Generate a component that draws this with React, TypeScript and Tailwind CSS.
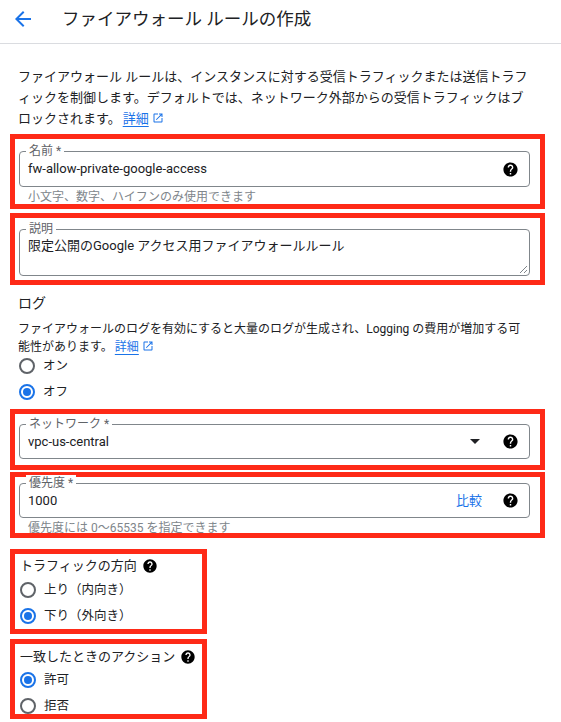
import React from "react";

const HELP =
  "M12 2C6.48 2 2 6.48 2 12s4.48 10 10 10 10-4.48 10-10S17.52 2 12 2zm1 17h-2v-2h2v2zm2.07-7.75l-.9.92C13.45 12.9 13 13.5 13 15h-2v-.5c0-1.1.45-2.1 1.17-2.83l1.24-1.26c.37-.36.59-.86.59-1.41 0-1.1-.9-2-2-2s-2 .9-2 2H8c0-2.21 1.79-4 4-4s4 1.79 4 4c0 .88-.36 1.68-.93 2.25z";

function HelpIcon({ size = 17 }: { size?: number }) {
  return (
    <svg width={size} height={size} viewBox="0 0 24 24" className="shrink-0">
      <path fill="#000" d={HELP} />
    </svg>
  );
}

function ExtIcon() {
  return (
    <svg width="12" height="12" viewBox="0 0 24 24" className="inline-block ml-[3px] align-[-1px]">
      <path
        fill="#1a73e8"
        d="M19 19H5V5h7V3H5c-1.11 0-2 .9-2 2v14c0 1.1.89 2 2 2h14c1.1 0 2-.9 2-2v-7h-2v7zM14 3v2h3.59l-9.83 9.83 1.41 1.41L19 6.41V10h2V3h-7z"
      />
    </svg>
  );
}

function Radio({ checked, label }: { checked?: boolean; label: string }) {
  return (
    <div className="flex items-center h-[26px]">
      <span
        className={
          checked
            ? "w-[16px] h-[16px] rounded-full border-2 border-[#1a73e8] flex items-center justify-center"
            : "w-[16px] h-[16px] rounded-full border-2 border-[#5f6368] flex items-center justify-center"
        }
      >
        {checked && <span className="w-[8px] h-[8px] rounded-full bg-[#1a73e8]" />}
      </span>
      <span className="ml-[8px] text-[12.5px] text-[#202124]">{label}</span>
    </div>
  );
}

function FieldLabel({ text }: { text: string }) {
  return (
    <span className="absolute left-[6px] top-[-9px] bg-white px-[3px] text-[12px] leading-[16px] text-[#5f6368]">
      {text}
    </span>
  );
}

function RedBox({ className, children }: { className: string; children: React.ReactNode }) {
  return <div className={"border-[5px] border-[#fe2a17] box-border " + className}>{children}</div>;
}

export default function App() {
  return (
    <div className="w-[561px] h-[722px] overflow-hidden bg-white font-['Roboto','Noto_Sans_CJK_JP',sans-serif] text-[#202124]">
      {/* header */}
      <div className="h-[44px] border-b border-[#dadce0] flex items-center">
        <svg width="24" height="24" viewBox="0 0 24 24" className="ml-[11px] mb-[5px]">
          <path fill="#1a73e8" d="M20 11H7.83l5.59-5.59L12 4l-8 8 8 8 1.41-1.41L7.83 13H20v-2z" />
        </svg>
        <h1 className="ml-[27px] mb-[5px] text-[17.5px] leading-[24px] font-normal text-[#202124]">
          ファイアウォール ルールの作成
        </h1>
      </div>

      <div className="pl-[10px]">
        <p className="mt-[22px] ml-[8px] w-[512px] text-[13px] leading-[21px] text-[#202124]">
          ファイアウォール ルールは、インスタンスに対する受信トラフィックまたは送信トラフィックを制御します。デフォルトでは、ネットワーク外部からの受信トラフィックはブロックされます。
          <span className="text-[#1a73e8] underline decoration-[#1a73e8] underline-offset-[3px] ml-[2px]">詳細</span>
          <ExtIcon />
        </p>

        {/* name */}
        <RedBox className="mt-[5px] w-[535px] h-[75px] pt-[12px] pl-[4px]">
          <div className="relative w-[511px] h-[36px] border border-[#80868b] rounded-[4px] flex items-center pl-[8px] pr-[10px]">
            <FieldLabel text="名前 *" />
            <span className="flex-1 text-[13px]">fw-allow-private-google-access</span>
            <HelpIcon />
          </div>
          <div className="mt-[2px] ml-[9px] text-[12px] leading-[16px] text-[#80868b]">
            小文字、数字、ハイフンのみ使用できます
          </div>
        </RedBox>

        {/* description */}
        <RedBox className="mt-[4px] w-[535px] h-[72px] pt-[11px] pl-[4px]">
          <div className="relative w-[511px] h-[47px] border border-[#80868b] rounded-[4px] pl-[8px] pt-[3px]">
            <FieldLabel text="説明" />
            <span className="text-[13px] leading-[20px]">限定公開のGoogle アクセス用ファイアウォールルール</span>
            <svg width="9" height="9" viewBox="0 0 9 9" className="absolute right-[1px] bottom-[1px]">
              <path d="M8 1L1 8M8 5L5 8" stroke="#80868b" strokeWidth="1" />
            </svg>
          </div>
        </RedBox>

        {/* log */}
        <div className="ml-[8px] mt-[8px] text-[14px] leading-[20px]">ログ</div>
        <p className="ml-[8px] mt-[7px] w-[514px] text-[12px] leading-[18px]">
          ファイアウォールのログを有効にすると大量のログが生成され、Logging の費用が増加する可能性があります。
          <span className="text-[#1a73e8] underline decoration-[#1a73e8] underline-offset-[3px] ml-[2px]">詳細</span>
          <ExtIcon />
        </p>
        <div className="ml-[9px] mt-[-3px]">
          <Radio label="オン" />
          <Radio label="オフ" checked />
        </div>

        {/* network */}
        <RedBox className="mt-[4px] w-[535px] h-[61px] pt-[10px] pl-[4px]">
          <div className="relative w-[511px] h-[35px] border border-[#80868b] rounded-[4px] flex items-center pl-[8px] pr-[10px]">
            <FieldLabel text="ネットワーク *" />
            <span className="flex-1 text-[13px]">vpc-us-central</span>
            <svg width="10" height="5" viewBox="0 0 10 5" className="mr-[22px]">
              <path d="M0 0L10 0L5 5Z" fill="#202124" />
            </svg>
            <HelpIcon />
          </div>
        </RedBox>

        {/* priority */}
        <RedBox className="mt-[2px] w-[535px] h-[66px] pt-[6px] pl-[4px]">
          <div className="relative w-[511px] h-[35px] border border-[#80868b] rounded-[4px] flex items-center pl-[8px] pr-[10px]">
            <FieldLabel text="優先度 *" />
            <span className="flex-1 text-[13px]">1000</span>
            <span className="text-[13px] text-[#1a73e8] mr-[20px]">比較</span>
            <HelpIcon />
          </div>
          <div className="mt-[2px] ml-[9px] text-[12px] leading-[16px] text-[#80868b]">
            優先度には 0〜65535 を指定できます
          </div>
        </RedBox>

        {/* direction */}
        <RedBox className="mt-[11px] w-[197px] h-[85px] pt-[2px] pl-[5px]">
          <div className="flex items-center h-[20px] text-[13px]">
            トラフィックの方向
            <span className="ml-[5px]">
              <HelpIcon size={16} />
            </span>
          </div>
          <div className="mt-[1px]">
            <Radio label="上り（内向き）" />
            <Radio label="下り（外向き）" checked />
          </div>
        </RedBox>

        {/* action */}
        <RedBox className="mt-[5px] w-[197px] h-[80px] pt-[3px] pl-[5px]">
          <div className="flex items-center h-[20px] text-[13px]">
            一致したときのアクション
            <span className="ml-[5px]">
              <HelpIcon size={16} />
            </span>
          </div>
          <div>
            <Radio label="許可" checked />
            <Radio label="拒否" />
          </div>
        </RedBox>
      </div>
    </div>
  );
}
